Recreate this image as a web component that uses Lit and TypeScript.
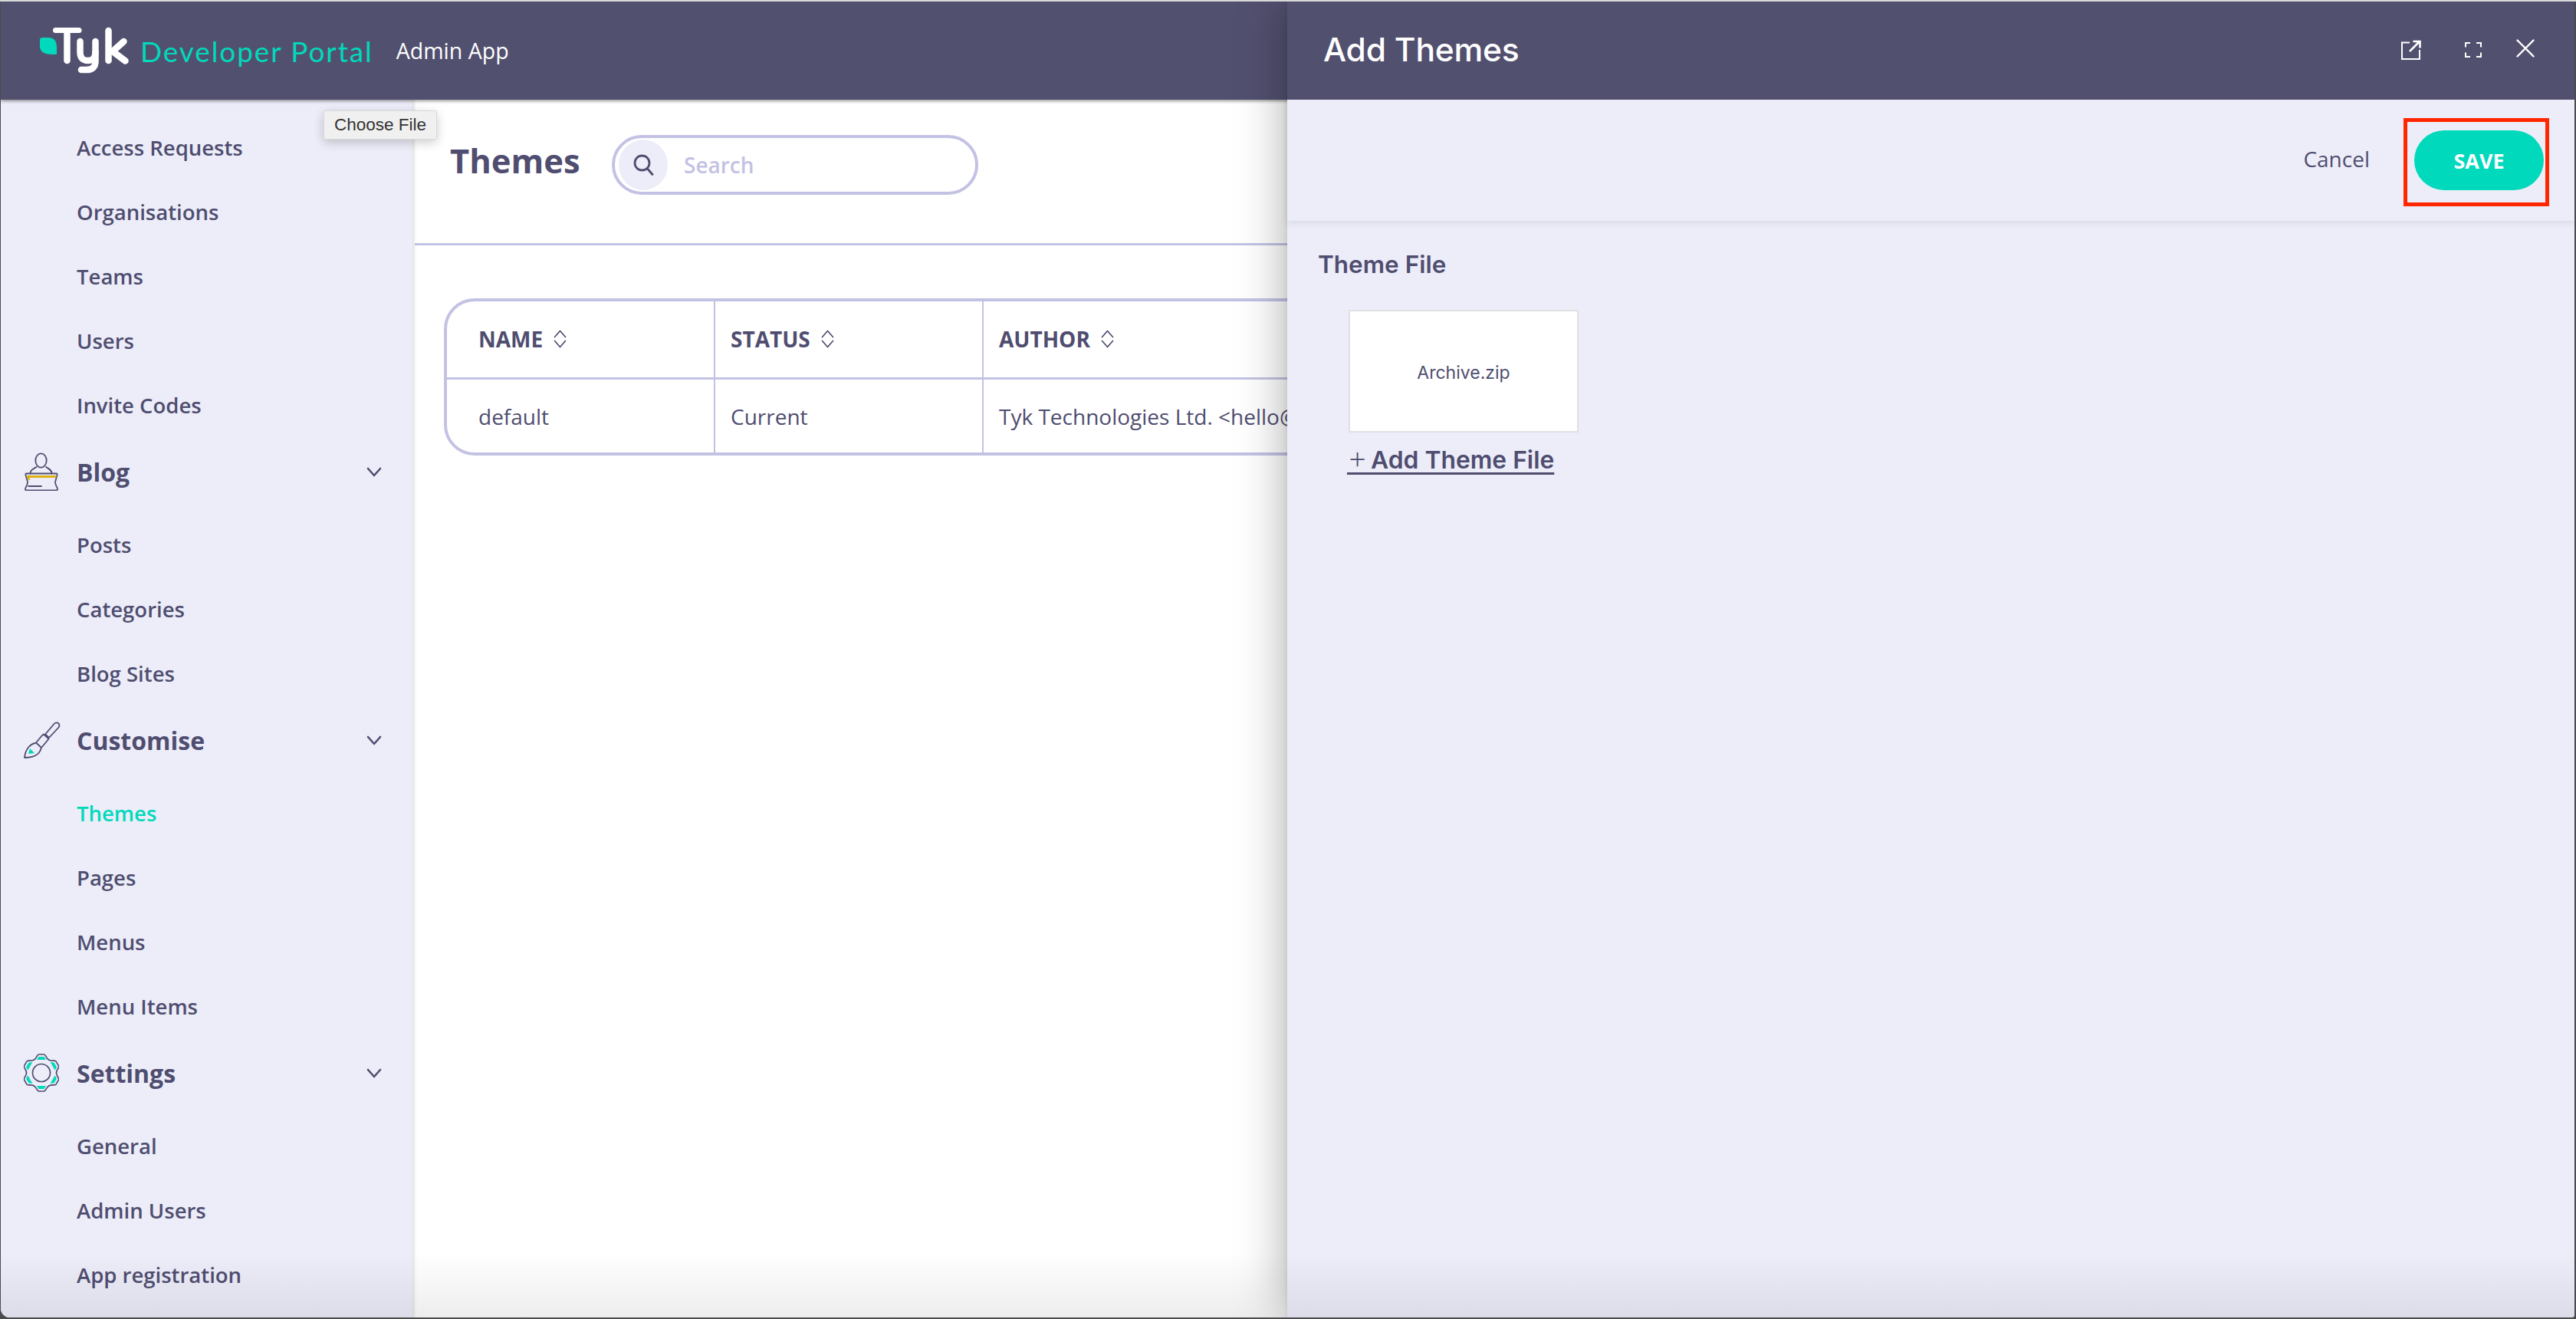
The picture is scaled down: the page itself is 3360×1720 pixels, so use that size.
import { html, svg, css, LitElement } from 'lit'
import { customElement } from 'lit/decorators.js'

const chevron = html`<svg class="chev" width="20" height="13" viewBox="0 0 20 13" fill="none" stroke="#4f4d70" stroke-width="2.6" stroke-linecap="round" stroke-linejoin="round"><path d="M2 2l8 9 8-9" /></svg>`

const sort = html`<svg class="sort" width="17" height="24" viewBox="0 0 17 24" fill="none" stroke="#4f4d70" stroke-width="1.7" stroke-linecap="round" stroke-linejoin="round"><path d="M1.5 9.5L8.5 1.5l7 8M1.5 14.5l7 8 7-8" /></svg>`

const blogIcon = html`<svg width="46" height="50" viewBox="0 0 46 50" fill="none" stroke="#4f4d70" stroke-width="1.8" stroke-linecap="round" stroke-linejoin="round">
  <ellipse cx="22.5" cy="10.5" rx="7.2" ry="9.2" />
  <path d="M8.5 27.5C8.5 23 12 21.5 16.5 19M29 19c4 2.5 7.500 4 7.500 8.500" />
  <path d="M3.500 27.500h39q1.500 0 1 2l-2.500 9q0 3 2.500 7.500q1.500 3.500-1.500 3.500h-38q-3 0-1.500-3.500q2.500-4.500 2.500-7.500l-2.500-9q-.5-2 1-2z" />
  <path d="M5 31.500h36" stroke="#dfb00f" stroke-width="3" />
  <path d="M5.500 32l1.500 3" stroke="#dfb00f" stroke-width="2.400" />
  <path d="M6 44h17" />
</svg>`

const brushIcon = html`<svg width="48" height="48" viewBox="0 0 48 48" fill="none" stroke="#4f4d70" stroke-width="1.8" stroke-linecap="round" stroke-linejoin="round">
  <path d="M8 35l6 6-8 1z" fill="#00d9bb" stroke="none" />
  <path d="M40 2.500a3.600 3.600 0 0 1 5.500 5L33 21l-5-4.500z" />
  <path d="M23.500 18.500l2.500-2 6.500 6-2 2.500-7.500 9-7-6.500z" />
  <path d="M15 28c-7 1.500-13 8-14 19 9.500 0 19.500-3 21.500-12" />
</svg>`

const gearLobes = [0, 60, 120, 180, 240, 300]
const gearIcon = html`<svg width="46" height="50" viewBox="0 0 46 50" fill="none" stroke="#4f4d70" stroke-width="1.7" stroke-linecap="round" stroke-linejoin="round">
  ${gearLobes.map(
    (a) => svg`<g transform="rotate(${a} 23 25)">
      <polygon points="19.500,4 26.500,4 29,8 17,8" fill="#00d9bb" stroke="none" />
      <path d="M13.250 8.100Q15.500 7 17.500 2.800Q18.500 1 20 1H26Q27.500 1 28.500 2.800Q30.500 7 32.750 8.100" />
    </g>`,
  )}
  <circle cx="23" cy="25" r="11.500" />
</svg>`

// wordmark of the logo, drawn with strokes like the mark itself
const logo = html`<svg class="logo" role="img" aria-label="Tyk" width="120" height="64" viewBox="50 34 120 64" fill="none" stroke="#fff" stroke-width="8.500" stroke-linecap="round" stroke-linejoin="round">
  <path d="M52 52q0-3 3-3h8q11 0 11 13v9h-6q-16 0-16-11z" fill="#00d9bb" stroke="none" />
  <path d="M72.500 39.500H103" stroke-width="7" />
  <path d="M87.500 42V79" />
  <path d="M104.500 54V68q0 11 10 11t10-11" />
  <path d="M124.500 54V80q0 11-12 11H106" />
  <path d="M141.500 40V79" />
  <path d="M161.500 54L147 67l16.500 12.500" />
</svg>`

const searchIcon = html`<svg width="27" height="28" viewBox="0 0 27 28" fill="none" stroke="#4f4d70" stroke-width="2.800" stroke-linecap="round"><circle cx="11.500" cy="11.500" r="9.500" /><path d="M18.500 19l6.500 7.500" /></svg>`

const externalIcon = html`<svg width="26" height="26" viewBox="0 0 26 26" fill="none" stroke="#fff" stroke-width="2"><path d="M11 3.500H1v21.500h23V13" /><path d="M11 15L24 2M15.500 2H24.500V10.500" stroke-width="2.600" /></svg>`

const fullIcon = html`<svg width="22" height="20" viewBox="0 0 22 20" fill="none" stroke="#fff" stroke-width="2"><path d="M1 6.500V1H7M15 1H21V6.500M21 13.500V19H15M7 19H1V13.500" /></svg>`

const closeIcon = html`<svg width="24" height="24" viewBox="0 0 24 24" fill="none" stroke="#fff" stroke-width="2.400" stroke-linecap="round"><path d="M1.500 1.500l21 21M22.500 1.500l-21 21" /></svg>`

const groups = [
  { items: ['Access Requests', 'Organisations', 'Teams', 'Users', 'Invite Codes'] },
  { title: 'Blog', icon: blogIcon, items: ['Posts', 'Categories', 'Blog Sites'] },
  { title: 'Customise', icon: brushIcon, items: ['Themes', 'Pages', 'Menus', 'Menu Items'] },
  { title: 'Settings', icon: gearIcon, items: ['General', 'Admin Users', 'App registration'] },
]

@customElement('app-root')
export class AppRoot extends LitElement {
  static styles = css`
    :host {
      display: block;
      width: 3360px;
      height: 1720px;
      box-sizing: border-box;
      background: #4b4b4e;
      border-top: 2px solid #d8d8d8;
      font-family: 'Open Sans', sans-serif;
      color: #4f4d70;
    }
    .window {
      position: relative;
      height: 1716px;
      margin: 0 2px 0 1px;
      display: flex;
      flex-direction: column;
      background: #fff;
      overflow: hidden;
      border-radius: 0 0 4px 12px;
    }
    .topbar {
      flex: none;
      position: relative;
      z-index: 2;
      height: 128px;
      display: flex;
      align-items: center;
      padding-left: 49px;
      background: #52506f;
      box-shadow: 0 2px 4px rgba(0, 0, 0, 0.4);
    }
    .brand {
      margin-left: 13px;
      font: 400 37px 'Lato', sans-serif;
      letter-spacing: 1.900px;
      color: #00d9bb;
    }
    .app {
      margin-left: 30px;
      font-size: 28.500px;
      color: #fff;
    }
    .body {
      flex: 1;
      display: flex;
      min-height: 0;
    }
    .sidebar {
      flex: none;
      position: relative;
      z-index: 1;
      width: 537px;
      margin-right: 3px;
      padding-top: 20px;
      background: #ecedf8;
      box-shadow: 2px 0 4px rgba(0, 0, 0, 0.14);
    }
    .head {
      height: 90px;
      display: flex;
      align-items: center;
      margin-bottom: 8px;
      font-size: 32px;
      font-weight: 700;
    }
    .head-icon {
      width: 69px;
      padding-left: 30px;
      display: flex;
      flex: none;
    }
    .head .chev {
      margin-left: auto;
      margin-right: 40px;
    }
    .item {
      height: 84px;
      display: flex;
      align-items: center;
      padding-left: 99px;
      font-size: 27.500px;
      font-weight: 600;
    }
    .item.active {
      color: #00d9bb;
    }
    .main {
      flex: 1;
      min-width: 0;
    }
    .title-row {
      height: 190px;
      box-sizing: border-box;
      display: flex;
      align-items: flex-start;
      padding: 46px 0 0 46px;
      gap: 43px;
      border-bottom: 3px solid #c3c2e4;
    }
    h1 {
      margin: 0;
      width: 168px;
      font-size: 43.500px;
      line-height: 68px;
      font-weight: 700;
    }
    .search {
      width: 478px;
      height: 78px;
      box-sizing: border-box;
      display: flex;
      align-items: center;
      padding-left: 5px;
      gap: 21px;
      border: 4px solid #c3c2e4;
      border-radius: 39px;
    }
    .search-btn {
      width: 64px;
      height: 66px;
      flex: none;
      display: flex;
      align-items: center;
      justify-content: center;
      border-radius: 50%;
      background: #ecedf8;
    }
    .search span {
      font-size: 28px;
      font-weight: 600;
      color: #c3c2e4;
    }
    .table {
      margin: 69px 38px 0;
      height: 205px;
      box-sizing: border-box;
      display: grid;
      grid-template-columns: 350px 350px 1fr;
      grid-template-rows: 102px 1fr;
      border: 4px solid #c3c2e4;
      border-radius: 40px;
      overflow: hidden;
    }
    .cell {
      display: flex;
      align-items: center;
      padding-left: 41px;
      font-size: 28px;
      border-right: 2px solid #c3c2e4;
    }
    .th {
      gap: 14px;
      padding-bottom: 2px;
      font-size: 28px;
      font-weight: 700;
      border-bottom: 3px solid #c3c2e4;
    }
    .cell:nth-child(3n) {
      border-right: 0;
      padding-left: 20px;
    }
    .cell:nth-child(3n-1) {
      padding-left: 20px;
    }
    .drawer {
      position: absolute;
      z-index: 3;
      top: 0;
      bottom: 0;
      left: 1678px;
      right: 0;
      display: flex;
      flex-direction: column;
      background: #ecedf8;
      box-shadow: 0 0 60px rgba(0, 0, 0, 0.34), 0 0 6px rgba(0, 0, 0, 0.08);
    }
    .drawer-top {
      flex: none;
      height: 128px;
      display: flex;
      align-items: center;
      padding: 0 52px 0 47px;
      background: #52506f;
      color: #fff;
    }
    .drawer-top h2 {
      margin: 0 auto 3px 0;
      font: 500 42.500px 'Inter', sans-serif;
      letter-spacing: -0.200px;
    }
    .tools {
      display: flex;
      align-items: center;
      margin-bottom: 6px;
    }
    .tools svg:nth-child(1) {
      margin-right: 57px;
      margin-top: 4px;
    }
    .tools svg:nth-child(2) {
      margin-right: 45px;
      margin-top: 4px;
    }
    .actions {
      flex: none;
      position: relative;
      height: 158px;
      display: flex;
      align-items: center;
      justify-content: flex-end;
      padding: 0 40px 0 0;
      box-shadow: 0 3px 8px rgba(70, 70, 110, 0.12);
    }
    .cancel {
      margin: 0 58px 5px 0;
      font-size: 28px;
    }
    .save {
      width: 169px;
      height: 78px;
      display: flex;
      align-items: center;
      justify-content: center;
      border-radius: 39px;
      background: #00d9bb;
      color: #fff;
      font-size: 27px;
      font-weight: 700;
    }
    .mark {
      position: absolute;
      left: 1456px;
      top: 24px;
      width: 190px;
      height: 115px;
      box-sizing: border-box;
      border: 5px solid #ff2600;
    }
    .form {
      padding: 37px 0 0 40px;
      font-family: 'Inter', sans-serif;
    }
    .label {
      font-size: 31.500px;
      line-height: 40px;
      font-weight: 600;
    }
    .file {
      width: 300px;
      height: 160px;
      box-sizing: border-box;
      margin: 39px 0 0 40px;
      display: flex;
      align-items: center;
      justify-content: center;
      padding-top: 4px;
      background: #fff;
      border: 2px solid #e0e0e5;
      font-size: 23px;
    }
    .add {
      display: inline-block;
      margin: 16px 0 0 40px;
      font-size: 31.800px;
      line-height: 40px;
      font-weight: 600;
      color: #4f4d70;
      text-decoration: underline;
      text-underline-offset: 5px;
    }
    .add i {
      font-style: normal;
      font-weight: 200;
      font-size: 42px;
      line-height: 0;
      margin-left: -2px;
      margin-right: -4px;
    }
    .tip {
      position: absolute;
      z-index: 4;
      left: 421px;
      top: 142px;
      width: 148px;
      height: 38px;
      box-sizing: border-box;
      display: flex;
      align-items: center;
      justify-content: center;
      background: #f0f0f0;
      border: 1px solid #d9d9d9;
      border-radius: 3px;
      box-shadow: 0 4px 14px rgba(0, 0, 0, 0.2);
      font: 22.500px 'Liberation Sans', sans-serif;
      color: #333;
    }
    .fade {
      position: absolute;
      z-index: 5;
      left: 0;
      right: 0;
      bottom: 0;
      height: 85px;
      background: linear-gradient(rgba(0, 0, 20, 0), rgba(0, 0, 20, 0.07));
      pointer-events: none;
    }
  `

  render() {
    return html`
      <div class="window">
        <header class="topbar">
          ${logo}
          <span class="brand">Developer Portal</span>
          <span class="app">Admin App</span>
        </header>
        <div class="body">
          <nav class="sidebar">
            ${groups.map(
              (g) => html`
                <div class="group">
                  ${g.title
                    ? html`<div class="head"><span class="head-icon">${g.icon}</span>${g.title}${chevron}</div>`
                    : ''}
                  ${g.items.map((i) => html`<div class="item ${i === 'Themes' ? 'active' : ''}">${i}</div>`)}
                </div>
              `,
            )}
          </nav>
          <main class="main">
            <div class="title-row">
              <h1>Themes</h1>
              <div class="search">
                <div class="search-btn">${searchIcon}</div>
                <span>Search</span>
              </div>
            </div>
            <div class="table">
              <div class="cell th">NAME ${sort}</div>
              <div class="cell th">STATUS ${sort}</div>
              <div class="cell th">AUTHOR ${sort}</div>
              <div class="cell">default</div>
              <div class="cell">Current</div>
              <div class="cell">Tyk Technologies Ltd. &lt;hello@tyk.io&gt;</div>
            </div>
          </main>
        </div>
        <div class="tip">Choose File</div>
        <aside class="drawer">
          <div class="drawer-top">
            <h2>Add Themes</h2>
            <div class="tools">${externalIcon}${fullIcon}${closeIcon}</div>
          </div>
          <div class="actions">
            <span class="cancel">Cancel</span>
            <div class="save">SAVE</div>
            <div class="mark"></div>
          </div>
          <div class="form">
            <div class="label">Theme File</div>
            <div class="file">Archive.zip</div>
            <a class="add"><i>+</i> Add Theme File</a>
          </div>
        </aside>
        <div class="fade"></div>
      </div>
    `
  }
}
